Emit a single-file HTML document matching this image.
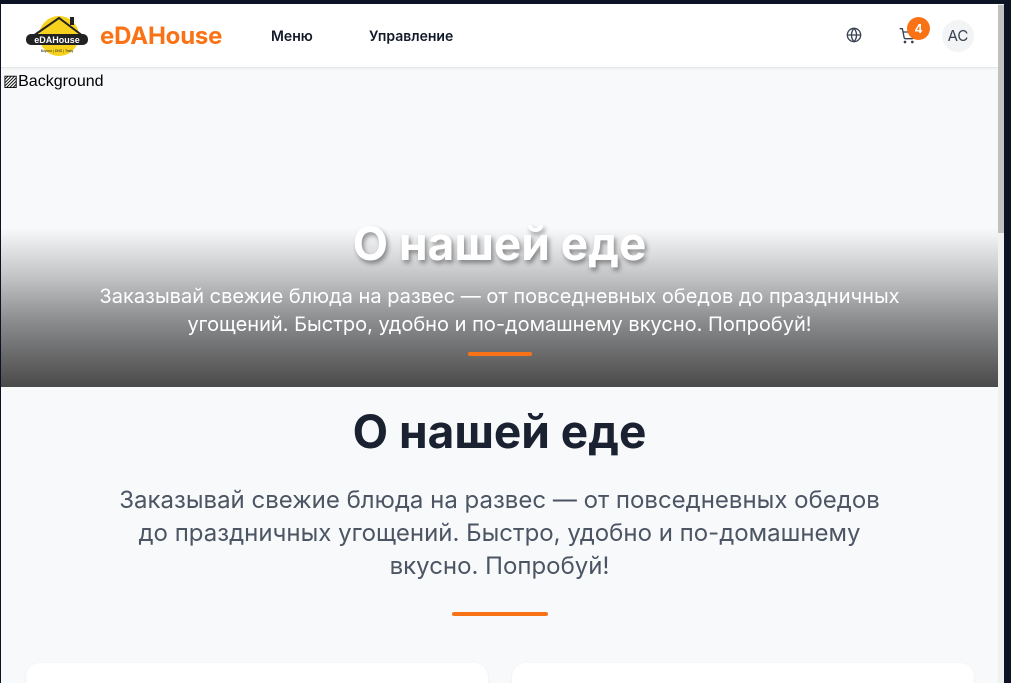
<!DOCTYPE html>
<html><head><meta charset="utf-8"><style>
*{margin:0;padding:0;box-sizing:border-box}
body{width:1011px;height:683px;overflow:hidden;background:#0b1324;font-family:"Inter","Liberation Sans",sans-serif;position:relative}
.page{position:absolute;left:1px;top:4px;width:997px;height:679px;background:#f8f9fb;overflow:hidden}
.sb{position:absolute;left:998px;top:4px;width:6px;height:679px;background:#f1f1f1}
.sb i{position:absolute;left:0;top:1px;width:6px;height:228px;background:#c1c1c1}
header{position:absolute;left:0;top:0;width:997px;height:64px;background:#fff;border-bottom:1px solid #e5e7eb;box-shadow:0 1px 2px rgba(0,0,0,.05)}
.brand{position:absolute;left:99px;top:17px;font-size:24px;font-weight:bold;color:#f97316;letter-spacing:-.2px}
.nav{position:absolute;top:24px;font-size:14px;color:#111827;font-weight:600}
.hero{position:absolute;left:0;top:64px;width:997px;height:319px}
.grad{position:absolute;left:0;top:160px;width:997px;height:159px;background:linear-gradient(#f8f9fb 0%,#c4c5c7 30%,#88898a 60%,#4a4a4a 100%)}
.h1{position:absolute;width:997px;text-align:center;color:#fff;font-weight:bold;font-size:46px;top:148px;text-shadow:2px 3px 5px rgba(0,0,0,.4)}
.p1{position:absolute;width:997px;text-align:center;color:#fff;font-size:20px;line-height:28px;top:214px}
.bar{position:absolute;height:4px;border-radius:2px;background:#f97316}
.h2{position:absolute;width:997px;text-align:center;color:#1a2130;font-weight:bold;font-size:46px;top:400px}
.p2{position:absolute;left:110px;width:777px;text-align:center;color:#4b5563;font-size:24px;line-height:33px;top:479px}
.card{position:absolute;top:659px;height:40px;background:#fff;border-radius:14px;box-shadow:0 1px 3px rgba(0,0,0,.05)}
</style></head><body>
<div class="page">
<header>
<svg style="position:absolute;left:24px;top:10px" width="64" height="44" viewBox="0 0 64 44">
<circle cx="34" cy="22" r="20" fill="#f6d21f"/>
<path d="M8 22 L34 4 L58 22" stroke="#222" stroke-width="2" fill="none"/>
<rect x="45" y="3" width="4" height="8" fill="#222"/>
<rect x="1" y="20" width="62" height="11" rx="5" fill="#222"/>
<text x="32" y="29" font-size="9" font-weight="bold" fill="#fff" text-anchor="middle" font-family="Liberation Sans">eDAHouse</text>
<text x="32" y="38" font-size="3.5" fill="#222" text-anchor="middle" font-family="Liberation Sans">Вкусно | DNS | Tasty</text>
</svg>
<div class="brand">eDAHouse</div>
<div class="nav" style="left:270px">Меню</div>
<div class="nav" style="left:368px">Управление</div>
<svg style="position:absolute;left:845px;top:23px" width="16" height="16" viewBox="0 0 24 24" fill="none" stroke="#374151" stroke-width="2"><circle cx="12" cy="12" r="10"/><path d="M2 12h20M12 2a15 15 0 0 1 0 20M12 2a15 15 0 0 0 0 20"/></svg>
<svg style="position:absolute;left:898px;top:24px" width="16" height="16" viewBox="0 0 24 24" fill="none" stroke="#374151" stroke-width="2"><circle cx="9" cy="21" r="1"/><circle cx="20" cy="21" r="1"/><path d="M1 1h4l2.7 13.4a2 2 0 0 0 2 1.6h9.7a2 2 0 0 0 2-1.6L23 6H6"/></svg>
<div style="position:absolute;left:906px;top:13px;width:23px;height:23px;border-radius:50%;background:#f97316;color:#fff;font-size:12px;font-weight:bold;text-align:center;line-height:23px">4</div>
<div style="position:absolute;left:941px;top:16px;width:32px;height:32px;border-radius:50%;background:#f3f4f6;color:#374151;font-size:15px;text-align:center;line-height:32px">AC</div>
</header>
<div class="hero">
<div style="position:absolute;left:2px;top:3px;font-size:16px;color:#000;font-family:'Liberation Sans',sans-serif">▨Background</div>
<div class="grad"></div>
<div class="h1">О нашей еде</div>
<div class="p1">Заказывай свежие блюда на развес — от повседневных обедов до праздничных<br>угощений. Быстро, удобно и по-домашнему вкусно. Попробуй!</div>
<div class="bar" style="left:467px;top:284px;width:64px"></div>
</div>
<div class="h2">О нашей еде</div>
<div class="p2">Заказывай свежие блюда на развес — от повседневных обедов до праздничных угощений. Быстро, удобно и по-домашнему вкусно. Попробуй!</div>
<div class="bar" style="left:451px;top:608px;width:96px"></div>
<div class="card" style="left:25px;width:462px"></div>
<div class="card" style="left:511px;width:462px"></div>
</div>
<div class="sb"><i></i></div>
</body></html>
